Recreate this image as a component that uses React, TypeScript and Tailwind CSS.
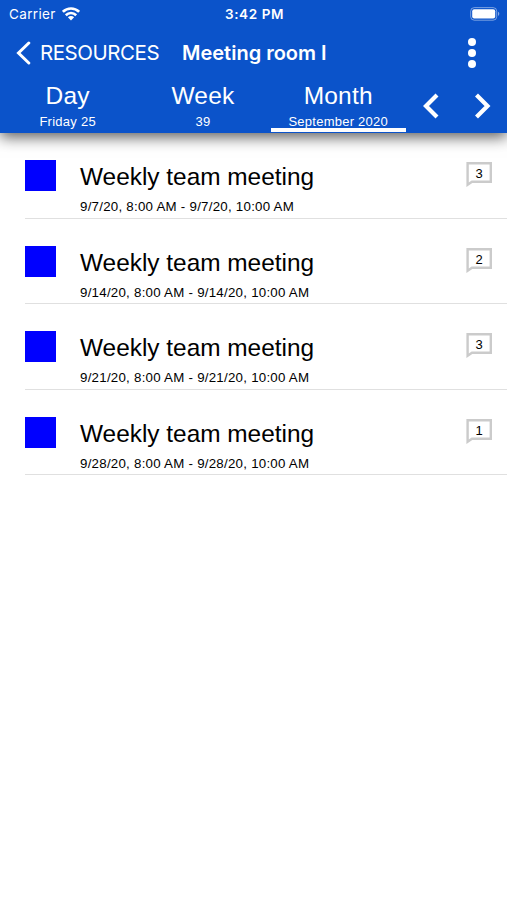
const tabs = [
  { label: 'Day', detail: 'Friday 25', active: false },
  { label: 'Week', detail: '39', active: false },
  { label: 'Month', detail: 'September 2020', active: true },
];

const meetings = [
  { title: 'Weekly team meeting', start: '9/7/20, 8:00 AM', end: '9/7/20, 10:00 AM', comments: 3 },
  { title: 'Weekly team meeting', start: '9/14/20, 8:00 AM', end: '9/14/20, 10:00 AM', comments: 2 },
  { title: 'Weekly team meeting', start: '9/21/20, 8:00 AM', end: '9/21/20, 10:00 AM', comments: 3 },
  { title: 'Weekly team meeting', start: '9/28/20, 8:00 AM', end: '9/28/20, 10:00 AM', comments: 1 },
];

function WifiIcon() {
  return (
    <svg width="18" height="14" viewBox="0 0 18 14" fill="none" stroke="white" strokeWidth="2.6">
      <path d="M0.9 4.8C5.5 0.3 12.5 0.3 17.1 4.8" />
      <path d="M3.8 8.2C6.8 5.3 11.2 5.3 14.2 8.2" />
      <path d="M9 13.4L5.9 10.3C7.6 8.7 10.4 8.7 12.1 10.3Z" fill="white" stroke="none" />
    </svg>
  );
}

function BatteryIcon() {
  return (
    <svg width="30" height="14" viewBox="0 0 30 14">
      <rect x="0.7" y="0.6" width="26" height="12.6" rx="3.6" fill="none" stroke="white" strokeOpacity="0.45" />
      <rect x="2.2" y="2.2" width="23" height="9.4" rx="2" fill="white" />
      <path d="M28 4.8C29.8 5.5 29.8 8.3 28 9Z" fill="white" fillOpacity="0.5" />
    </svg>
  );
}

function StatusBar() {
  return (
    <div className="grid h-[27px] grid-cols-3 items-center pl-[9px] pr-[7px] font-['Inter',sans-serif] text-[13.5px]">
      <div className="flex items-center gap-[6px]">
        <span className="pt-px tracking-[0.35px]">Carrier</span>
        <WifiIcon />
      </div>
      <span className="pt-px text-center font-semibold tracking-[0.6px]">3:42 PM</span>
      <div className="flex justify-end">
        <BatteryIcon />
      </div>
    </div>
  );
}

function NavBar() {
  return (
    <div className="flex h-[50px] items-center pl-4 pr-[30px] pt-px font-['Inter',sans-serif] text-[20px]">
      <svg width="15" height="24" viewBox="0 0 15 24" fill="none" stroke="white" strokeWidth="3" strokeLinecap="round">
        <path d="M12.8 2L2.5 12L12.8 22" />
      </svg>
      <span className="ml-[9px] w-[141px] whitespace-nowrap pt-px text-[20.5px] tracking-[-0.45px]">RESOURCES</span>
      <span className="whitespace-nowrap pl-px font-semibold">Meeting room I</span>
      <svg className="ml-auto" width="10" height="30" viewBox="0 0 10 30" fill="white">
        <circle cx="5" cy="4" r="4" />
        <circle cx="5" cy="15" r="4" />
        <circle cx="5" cy="26" r="4" />
      </svg>
    </div>
  );
}

function TabBar() {
  return (
    <div className="flex h-14">
      {tabs.map((tab) => (
        <div key={tab.label} className="flex w-[135.3px] flex-col items-center">
          <span className="mt-[3px] text-[24.5px] leading-8 tracking-[0.2px]">{tab.label}</span>
          <span className="mt-[3px] text-[13px] leading-[14px] tracking-[0.25px]">{tab.detail}</span>
          <div className={`-mt-px h-1 w-full shrink-0 ${tab.active ? 'bg-white' : ''}`} />
        </div>
      ))}
      <div className="flex flex-1 justify-between pl-[17px] pr-4 pt-4">
        <svg width="16" height="26" viewBox="0 0 16 26" fill="none" stroke="white" strokeWidth="4.2">
          <path d="M14 2L3 13L14 24" />
        </svg>
        <svg width="16" height="26" viewBox="0 0 16 26" fill="none" stroke="white" strokeWidth="4.2">
          <path d="M1.5 2L12.5 13L1.5 24" />
        </svg>
      </div>
    </div>
  );
}

function CommentBadge({ count }: { count: number }) {
  return (
    <div className="relative h-[26px] w-[27px]">
      <svg width="27" height="26" viewBox="0 0 27 26" fill="none" stroke="#cbcbcb" strokeWidth="2.4">
        <path d="M1.6 2.2H24.8V20.8H6L1.6 23.8Z" />
      </svg>
      <span className="absolute inset-x-0 top-[5px] pr-px text-center text-[13px] leading-4">{count}</span>
    </div>
  );
}

export default function App() {
  return (
    <div className="min-h-[900px] overflow-hidden bg-white font-['Liberation_Sans',Arial,sans-serif] text-black">
      <header className="h-[133px] bg-[#0b53ca] text-white shadow-[0_4px_14px_rgba(0,0,0,0.65)]">
        <StatusBar />
        <NavBar />
        <TabBar />
      </header>
      <ul className="pl-[25px]">
        {meetings.map((meeting) => (
          <li key={meeting.start} className="flex h-[85.5px] border-b border-[#e0e0e0] pt-[27px]">
            <div className="h-[31px] w-[31px] shrink-0 bg-[#0000ff]" />
            <div className="ml-6 flex-1">
              <p className="pt-px text-[24.4px] leading-8">{meeting.title}</p>
              <p className="mt-[6px] text-[13.3px] leading-4 tracking-[0.25px]">
                {meeting.start} - {meeting.end}
              </p>
            </div>
            <div className="mr-[14px] mt-px">
              <CommentBadge count={meeting.comments} />
            </div>
          </li>
        ))}
      </ul>
    </div>
  );
}
